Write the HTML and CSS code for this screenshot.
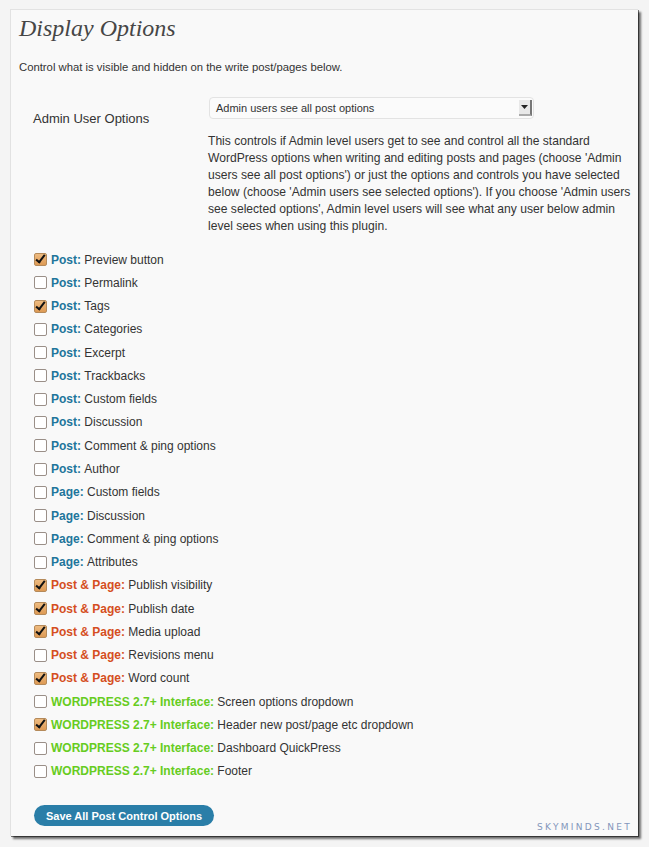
FILE: index.html
```html
<!DOCTYPE html>
<html>
<head>
<meta charset="utf-8">
<link rel="stylesheet" href="styles.css">
</head>
<body>
<div class="panel">
  <h2 class="title">Display Options</h2>
  <p class="intro">Control what is visible and hidden on the write post/pages below.</p>
  <div class="admin">
    <div class="admin-label">Admin User Options</div>
    <div class="admin-field">
      <div class="select"><span>Admin users see all post options</span><span class="arrow"><svg width="11" height="14" viewBox="0 0 11 14"><path d="M2 5h7L5.5 9z" fill="#222"/></svg></span></div>
      <p class="desc">This controls if Admin level users get to see and control all the standard<br>WordPress options when writing and editing posts and pages (choose 'Admin<br>users see all post options') or just the options and controls you have selected<br>below (choose 'Admin users see selected options'). If you choose 'Admin users<br>see selected options', Admin level users will see what any user below admin<br>level sees when using this plugin.</p>
    </div>
  </div>
  <ul class="opts">
    <li><span class="cb on"></span><b class="post">Post:</b> Preview button</li>
    <li><span class="cb"></span><b class="post">Post:</b> Permalink</li>
    <li><span class="cb on"></span><b class="post">Post:</b> Tags</li>
    <li><span class="cb"></span><b class="post">Post:</b> Categories</li>
    <li><span class="cb"></span><b class="post">Post:</b> Excerpt</li>
    <li><span class="cb"></span><b class="post">Post:</b> Trackbacks</li>
    <li><span class="cb"></span><b class="post">Post:</b> Custom fields</li>
    <li><span class="cb"></span><b class="post">Post:</b> Discussion</li>
    <li><span class="cb"></span><b class="post">Post:</b> Comment &amp; ping options</li>
    <li><span class="cb"></span><b class="post">Post:</b> Author</li>
    <li><span class="cb"></span><b class="post">Page:</b> Custom fields</li>
    <li><span class="cb"></span><b class="post">Page:</b> Discussion</li>
    <li><span class="cb"></span><b class="post">Page:</b> Comment &amp; ping options</li>
    <li><span class="cb"></span><b class="post">Page:</b> Attributes</li>
    <li><span class="cb on"></span><b class="both">Post &amp; Page:</b> Publish visibility</li>
    <li><span class="cb on"></span><b class="both">Post &amp; Page:</b> Publish date</li>
    <li><span class="cb on"></span><b class="both">Post &amp; Page:</b> Media upload</li>
    <li><span class="cb"></span><b class="both">Post &amp; Page:</b> Revisions menu</li>
    <li><span class="cb on"></span><b class="both">Post &amp; Page:</b> Word count</li>
    <li><span class="cb"></span><b class="wp">WORDPRESS 2.7+ Interface:</b> Screen options dropdown</li>
    <li><span class="cb on"></span><b class="wp">WORDPRESS 2.7+ Interface:</b> Header new post/page etc dropdown</li>
    <li><span class="cb"></span><b class="wp">WORDPRESS 2.7+ Interface:</b> Dashboard QuickPress</li>
    <li><span class="cb"></span><b class="wp">WORDPRESS 2.7+ Interface:</b> Footer</li>
  </ul>
  <div class="footer">
    <button class="save">Save All Post Control Options</button>
    <span class="mark">SKYMINDS.NET</span>
  </div>
</div>
</body>
</html>
```
FILE: styles.css
```css
html, body { margin: 0; padding: 0; }
body {
  background: #f4f4f4;
  font-family: "Liberation Sans", Arial, sans-serif;
  color: #333;
  width: 649px;
  height: 847px;
  overflow: hidden;
}
.panel {
  box-sizing: border-box;
  margin: 9px 0 0 10px;
  width: 628px;
  height: 827px;
  background: #f9f9f9;
  border-top: 1px solid #e2e2e2;
  border-left: 1px solid #e2e2e2;
  box-shadow: 3px 3px 2px rgba(0,0,0,0.55), 1px 1px 0 #777;
  padding: 0 0 0 8px;
}
.title {
  margin: 0;
  padding-top: 3px;
  font-family: "Liberation Serif", "Times New Roman", serif;
  font-style: italic;
  font-weight: normal;
  font-size: 24px;
  line-height: 30px;
  color: #464646;
}
.intro {
  margin: 17px 0 0;
  font-size: 11.3px;
  line-height: 15px;
}
.admin {
  display: grid;
  grid-template-columns: 189px 1fr;
  margin-top: 22px;
}
.admin-label {
  padding: 14px 0 0 14px;
  font-size: 13px;
  line-height: 16px;
}
.select {
  display: flex;
  justify-content: space-between;
  align-items: center;
  box-sizing: border-box;
  width: 325px;
  height: 22px;
  margin-left: 1px;
  border: 1px solid #e3e3e3;
  border-radius: 4px;
  background: #fbfbfb;
  font-size: 11px;
  padding: 0 1px 0 6px;
}
.arrow {
  display: flex;
  width: 13px;
  height: 16px;
  align-items: center;
  justify-content: center;
  background: #e8e8e8;
  border-right: 2px solid #777;
  border-bottom: 2px solid #aaa;
  box-sizing: border-box;
}
.desc {
  margin: 14px 0 0;
  font-size: 12.1px;
  line-height: 17px;
  white-space: nowrap;
}
.opts {
  list-style: none;
  margin: 13px 0 0;
  padding: 0 0 0 15px;
}
.opts li {
  display: flex;
  align-items: center;
  height: 23.27px;
  font-size: 12px;
}
.opts b { margin-right: 3.3px; }
.post { color: #21759b; }
.both { color: #d54e21; }
.wp { color: #66cc21; }
.cb {
  box-sizing: border-box;
  width: 13px;
  height: 13px;
  border: 1px solid #9a8f88;
  border-radius: 2px;
  background: #fff;
  margin-right: 4px;
  position: relative;
}
.cb.on {
  background: linear-gradient(#eebb80, #dd9a55);
  border-color: #b58a5a;
}
.cb.on::after {
  content: "";
  position: absolute;
  left: 3px;
  top: -1px;
  width: 3px;
  height: 8px;
  border-right: 2px solid #111;
  border-bottom: 2px solid #111;
  transform: rotate(38deg);
}
.footer {
  display: flex;
  align-items: flex-end;
  justify-content: space-between;
  margin-top: 22px;
  padding: 0 6px 0 15px;
}
.save {
  height: 21px;
  padding: 0 12px;
  border: none;
  border-radius: 11px;
  background: #2a7ea8;
  color: #fff;
  font-family: "Liberation Sans", Arial, sans-serif;
  font-weight: bold;
  font-size: 11px;
}
.mark {
  font-family: "DejaVu Sans", sans-serif;
  font-size: 9px;
  letter-spacing: 2.3px;
  color: #8396bb;
  margin-bottom: -6px;
}
```
